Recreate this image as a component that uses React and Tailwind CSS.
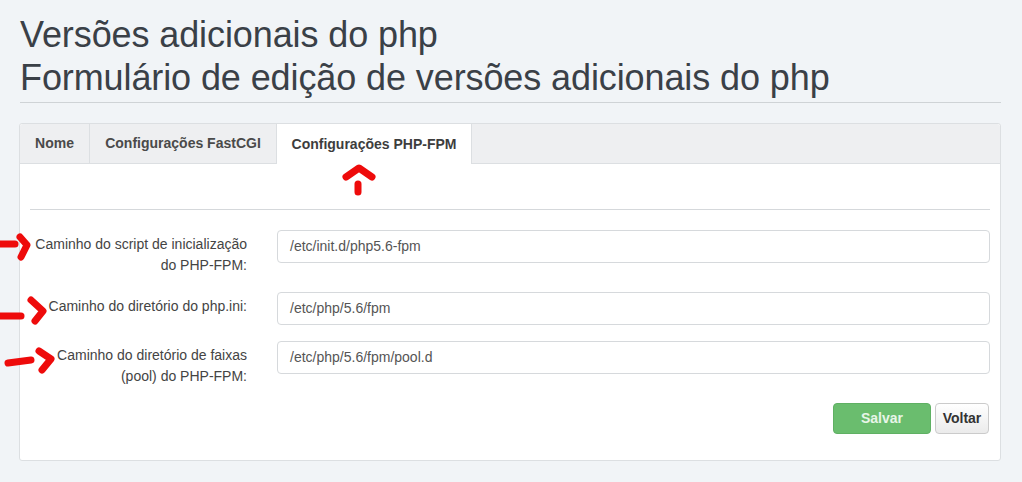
import React from 'react';

const font = { fontFamily: '"Liberation Sans", Arial, sans-serif' };

const fields = [
  { label: ['Caminho do script de inicialização', 'do PHP-FPM:'], value: '/etc/init.d/php5.6-fpm' },
  { label: ['Caminho do diretório do php.ini:'], value: '/etc/php/5.6/fpm' },
  { label: ['Caminho do diretório de faixas', '(pool) do PHP-FPM:'], value: '/etc/php/5.6/fpm/pool.d' },
];

const tabs = [
  { name: 'Nome', w: 'w-[70px]' },
  { name: 'Configurações FastCGI', w: 'w-[187px]' },
  { name: 'Configurações PHP-FPM', w: 'w-[195px]' },
];

function Marks() {
  // red hand-drawn annotation arrows lying over the form
  return (
    <svg className="absolute left-0 top-0 pointer-events-none" width="1022" height="482" viewBox="0 0 1022 482">
      <g stroke="#ee0b0b" strokeWidth="7" strokeLinecap="round" strokeLinejoin="round" fill="none">
        <path d="M346 177 L359 168 L372 177" />
        <path d="M358 184 L358 192" />
        <path d="M0 244 L15 244" />
        <path d="M20 237 L27 245 L21 257" />
        <path d="M0 316 L21 316" />
        <path d="M31 300 L43 311 L35 321" />
        <path d="M8 363 L31 360" />
        <path d="M39 351 L51 359 L42 370" />
      </g>
    </svg>
  );
}

export default function App() {
  return (
    <div style={font} className="relative w-[1022px] h-[482px] bg-[#f1f4f7] px-[19px] pt-[13px] overflow-hidden">
      <h1 className="pl-px text-[36px] leading-[43px] tracking-[-0.1px] text-[#3a4047] font-normal">
        Versões adicionais do php<br />Formulário de edição de versões adicionais do php
      </h1>
      <div className="mt-[3px] ml-px w-[981px] h-px bg-[#cfd3d6]" />

      <div className="mt-[20px] w-[982px] border border-[#dcdfe2] rounded-[3px] bg-white">
        <div className="flex h-[40px] bg-[#eeeff1] border-b border-[#dcdfe2] rounded-t-[3px]">
          {tabs.map((t, i) => (
            <div
              key={t.name}
              className={i === 2
                ? `${t.w} h-[40px] flex items-center justify-center bg-white border-r border-[#dcdfe2] text-[14px] font-bold text-[#3d3d3d]`
                : `${t.w} flex items-center justify-center border-r border-[#dcdfe2] text-[14px] font-bold text-[#4a4a4a]`}
            >
              {t.name}
            </div>
          ))}
        </div>

        <div className="px-[10px] pt-[45px] pb-[26px]">
          <div className="h-px bg-[#d5d8db] mb-[20px]" />
          {fields.map(f => (
            <div key={f.value} className="flex mb-[16px]">
              <div className="w-[217px] pt-[4px] text-right text-[14px] leading-[21px] text-[#444]">
                {f.label.map(l => <div key={l}>{l}</div>)}
              </div>
              <div className="ml-[30px] flex-1">
                <div className="h-[33px] border border-[#d6d9dc] rounded-[4px] px-[12px] flex items-center text-[14px] text-[#555]">
                  {f.value}
                </div>
              </div>
            </div>
          ))}
          <div className="flex justify-end gap-[4px] mt-px pr-px">
            <button className="w-[98px] h-[31px] rounded-[4px] bg-[#6abd6e] border border-[#5fb063] text-[14px] font-bold text-[#e8f5e8]">Salvar</button>
            <button className="w-[54px] h-[31px] rounded-[4px] bg-gradient-to-b from-white to-[#ebebeb] border border-[#cbcbcb] text-[14px] font-bold text-[#333]">Voltar</button>
          </div>
        </div>
      </div>
      <Marks />
    </div>
  );
}
